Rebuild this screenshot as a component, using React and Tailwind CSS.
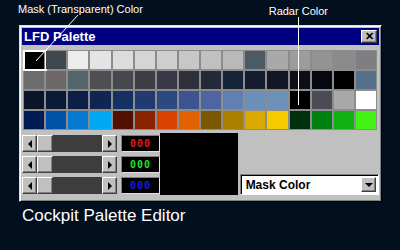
import React from "react";

// 16 x 4 palette swatches, row by row
const palette = [
  ["#000000", "#3f474f", "#ececec", "#e4e4e4", "#dcdcdc", "#d5d5d5", "#cecece", "#c7c7c7", "#c0c0c0", "#b9b9b9", "#4a5b66", "#a9a9a9", "#9c9c9c", "#939393", "#8a8a8b", "#7f7e82"],
  ["#6d6d70", "#6d6969", "#53646c", "#4f4f53", "#47474e", "#3d3d44", "#383847", "#30303d", "#222a3a", "#142337", "#141c2d", "#121627", "#0c0d15", "#06090f", "#000000", "#56708a"],
  ["#0a1529", "#0a1a37", "#0e1f47", "#102551", "#143163", "#1f3b71", "#2d4981", "#3b5591", "#4d66a2", "#5f80b0", "#6890ba", "#6b91b9", "#000000", "#4b4b55", "#a9a9a9", "#ffffff"],
  ["#001b52", "#0051a8", "#0879d1", "#00a9f2", "#521000", "#8a2200", "#d94100", "#e26100", "#7b5800", "#a98000", "#d9a900", "#f9c900", "#00310f", "#008212", "#10b212", "#42f212"],
];

const raised =
  "bg-[#c0c0c0] border border-t-white border-l-white border-r-[#404040] border-b-[#404040] shadow-[inset_-1px_-1px_#808080]";

const Arrow = ({ dir }) => (
  <svg width="8" height="8" viewBox="0 0 8 8">
    {dir === "left" && <path d="M6 0 L2 4 L6 8 Z" fill="black" />}
    {dir === "right" && <path d="M2 0 L6 4 L2 8 Z" fill="black" />}
    {dir === "down" && <path d="M0 2 L8 2 L4 6 Z" fill="black" />}
  </svg>
);

const ScrollRow = () => (
  <div className="flex h-[17px] w-[95px]">
    <div className={`${raised} w-[15px] flex items-center justify-center`}>
      <Arrow dir="left" />
    </div>
    <div className={`${raised} w-[16px]`} />
    <div className="flex-1 bg-[#3d3d3d]" />
    <div className={`${raised} w-[15px] flex items-center justify-center`}>
      <Arrow dir="right" />
    </div>
  </div>
);

const ValueBox = ({ color }) => (
  <div className="h-[17px] w-[39px] bg-black border border-t-[#808080] border-l-[#808080] border-r-[#dfdfdf] border-b-[#dfdfdf] flex items-center justify-center">
    <span className={`font-['DejaVu_Sans_Mono'] text-[10px] font-bold tracking-[1px] ${color}`}>000</span>
  </div>
);

export default function App() {
  return (
    <div className="relative w-[400px] h-[250px] overflow-hidden bg-[#020f1f] font-['Liberation_Sans',sans-serif]">
      {/* Annotation labels */}
      <div className="flex justify-between h-[25px] pl-[18px] pr-[72px] pt-[1px] text-[11px] text-white">
        <span>Mask (Transparent) Color</span>
        <span className="pt-[2px]">Radar Color</span>
      </div>

      {/* Palette window */}
      <div className="ml-[19px] w-[363px] h-[177px] bg-[#c0c0c0] border border-t-[#dfdfdf] border-l-[#dfdfdf] border-r-black border-b-black p-[2px] shadow-[inset_1px_1px_white,inset_-1px_-1px_#808080] flex flex-col">
        <div className="h-[17px] bg-[#000080] flex items-center justify-between pl-[2px] pr-[2px]">
          <span className="text-white font-bold text-[13px]">LFD Palette</span>
          <div className={`${raised} w-[16px] h-[13px] flex items-center justify-center text-[11px] font-bold leading-none text-black`}>
            ✕
          </div>
        </div>

        <div className="mt-[5px] ml-[1px] w-[354px] bg-[#8c8c8c] p-[1px] grid grid-cols-16 gap-[2px]">
          {palette.flat().map((c, i) => (
            <div key={i} className="relative h-[18px]" style={{ backgroundColor: c }}>
              {i === 0 && (
                <div className="absolute -top-[1px] -left-[1px] -right-[3px] -bottom-[2px] border-2 border-white" />
              )}
            </div>
          ))}
        </div>

        <div className="mt-[3px] flex">
          <div className="flex flex-col gap-[4px] pt-[2px]">
            <ScrollRow />
            <ScrollRow />
            <ScrollRow />
          </div>
          <div className="ml-[4px] flex flex-col gap-[4px] pt-[2px]">
            <ValueBox color="text-[#e01818]" />
            <ValueBox color="text-[#20e020]" />
            <ValueBox color="text-[#1818e0]" />
          </div>
          <div className="w-[78px] h-[62px] bg-black" />
          <div className="ml-[2px] self-end w-[140px] h-[21px] bg-white border border-t-[#808080] border-l-[#808080] border-r-white border-b-white shadow-[inset_1px_1px_black] flex items-center justify-between pl-[5px] pr-[2px]">
            <span className="font-bold text-[12px] text-black">Mask Color</span>
            <div className={`${raised} w-[15px] h-[15px] flex items-center justify-center`}>
              <Arrow dir="down" />
            </div>
          </div>
        </div>
      </div>

      <div className="ml-[22px] mt-[1px] text-[17px] text-white">Cockpit Palette Editor</div>

      {/* Pointer lines */}
      <svg className="absolute inset-0 pointer-events-none" width="400" height="250">
        <line x1="78" y1="15" x2="36" y2="61" stroke="white" strokeWidth="1" />
        <line x1="298.5" y1="17" x2="298.5" y2="105" stroke="white" strokeWidth="1" />
      </svg>
    </div>
  );
}
